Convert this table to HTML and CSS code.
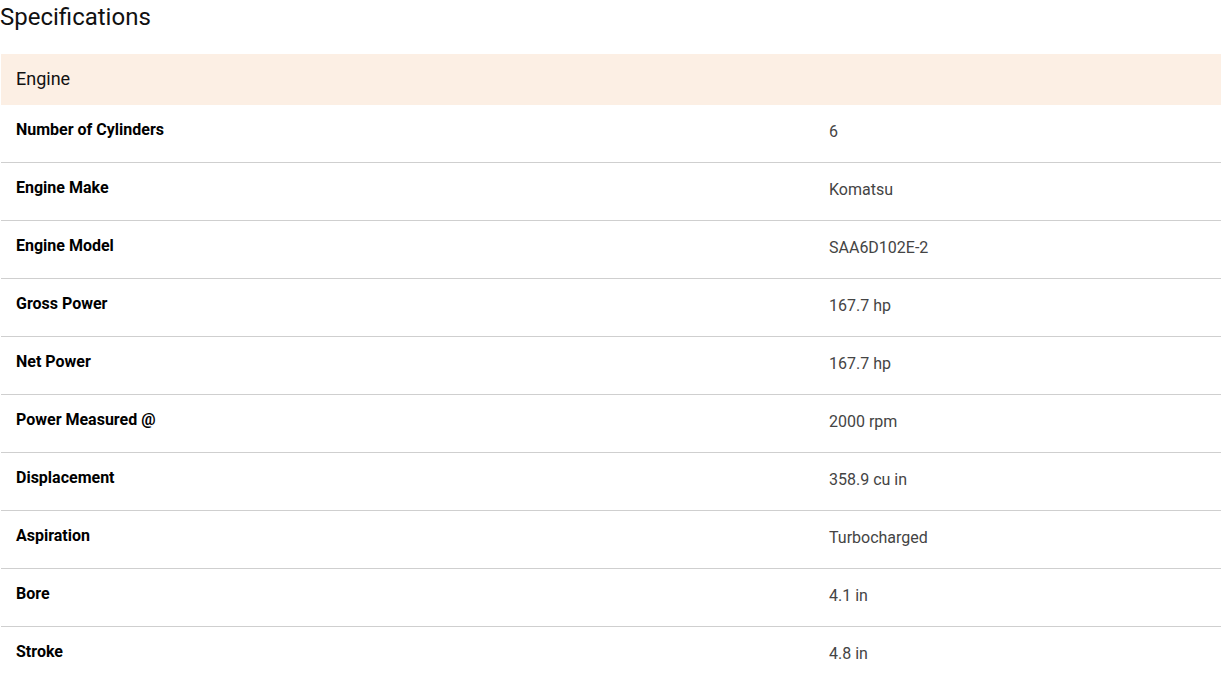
FILE: index.html
```html
<!DOCTYPE html>
<html>
<head>
<meta charset="utf-8">
<link rel="stylesheet" href="styles.css">
</head>
<body>
<div class="specs">
  <h2 class="title">Specifications</h2>
  <div class="group">
    <div class="group-head">Engine</div>
    <div class="row"><div class="label">Number of Cylinders</div><div class="value">6</div></div>
    <div class="row"><div class="label">Engine Make</div><div class="value">Komatsu</div></div>
    <div class="row"><div class="label">Engine Model</div><div class="value">SAA6D102E-2</div></div>
    <div class="row"><div class="label">Gross Power</div><div class="value">167.7 hp</div></div>
    <div class="row"><div class="label">Net Power</div><div class="value">167.7 hp</div></div>
    <div class="row"><div class="label">Power Measured @</div><div class="value">2000 rpm</div></div>
    <div class="row"><div class="label">Displacement</div><div class="value">358.9 cu in</div></div>
    <div class="row"><div class="label">Aspiration</div><div class="value">Turbocharged</div></div>
    <div class="row"><div class="label">Bore</div><div class="value">4.1 in</div></div>
    <div class="row"><div class="label">Stroke</div><div class="value">4.8 in</div></div>
  </div>
</div>
</body>
</html>
```
FILE: styles.css
```css
html, body {
  margin: 0;
  padding: 0;
  background: #fff;
  font-family: Roboto, "Liberation Sans", sans-serif;
}
.specs {
  width: 1220px;
  margin-left: 1px;
}
.title {
  margin: 0 0 0 -1px;
  height: 54px;
  padding-top: 3px;
  box-sizing: border-box;
  font-size: 24px;
  font-weight: 400;
  line-height: 28px;
  color: #111;
}
.group-head {
  height: 51px;
  background: #fcefe4;
  padding-left: 15px;
  font-size: 18px;
  line-height: 49px;
  color: #111;
}
.row {
  display: grid;
  grid-template-columns: 813px 1fr;
  height: 58px;
  box-sizing: border-box;
  border-bottom: 1px solid #cfcfcf;
}
.label {
  padding: 16px 0 0 15px;
  font-size: 16px;
  font-weight: 700;
  line-height: 18px;
  color: #000;
}
.value {
  padding: 18px 0 0 15px;
  font-size: 16px;
  line-height: 18px;
  color: #444;
}
```
